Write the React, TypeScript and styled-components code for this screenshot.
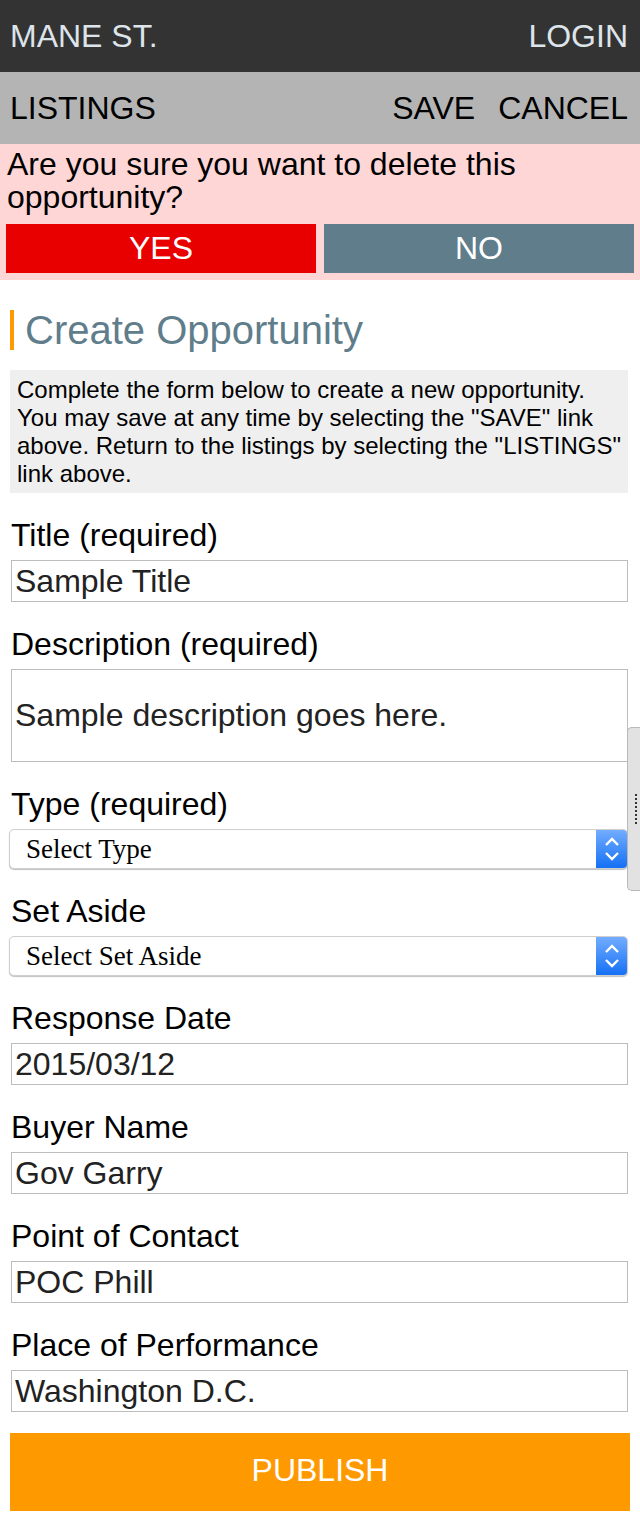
import styled, { createGlobalStyle } from "styled-components";

const GlobalStyle = createGlobalStyle`
  body {
    margin: 0;
    background: #fff;
    font-family: "Liberation Sans", Arial, sans-serif;
  }
  * { box-sizing: border-box; }
`;

interface IField {
    label: string;
    kind: 'input' | 'textarea' | 'select';
    value: string;
}

const FIELDS: IField[] = [
    { label: 'Title (required)', kind: 'input', value: 'Sample Title' },
    { label: 'Description (required)', kind: 'textarea', value: 'Sample description goes here.' },
    { label: 'Type (required)', kind: 'select', value: 'Select Type' },
    { label: 'Set Aside', kind: 'select', value: 'Select Set Aside' },
    { label: 'Response Date', kind: 'input', value: '2015/03/12' },
    { label: 'Buyer Name', kind: 'input', value: 'Gov Garry' },
    { label: 'Point of Contact', kind: 'input', value: 'POC Phill' },
    { label: 'Place of Performance', kind: 'input', value: 'Washington D.C.' },
];

const Page = styled.div`
  position: relative;
  width: 640px;
  min-height: 1524px;
`;

const Bar = styled.div<{ $dark?: boolean }>`
  height: 72px;
  display: flex;
  align-items: center;
  justify-content: space-between;
  padding: 0 12px 0 10px;
  background: ${p => p.$dark ? '#333333' : '#b4b4b4'};
  color: ${p => p.$dark ? '#dde4ea' : '#000'};
  font-size: 32px;
  line-height: 36px;
`;

const BarLinks = styled.div`
  display: flex;
  gap: 23px;
`;

const Alert = styled.div`
  background: #ffd6d6;
  padding: 4px 6px 7px;
`;

const AlertText = styled.p`
  margin: 0 0 10px 1px;
  font-size: 32px;
  line-height: 33px;
  color: #000;
`;

const AlertButtons = styled.div`
  display: grid;
  grid-template-columns: 1fr 1fr;
  gap: 8px;
`;

const AlertButton = styled.button<{ $confirm?: boolean }>`
  height: 49px;
  border: 0;
  padding: 0;
  background: ${p => p.$confirm ? '#e80000' : '#607d8b'};
  color: #fff;
  font-family: inherit;
  font-size: 32px;
`;

const Content = styled.main`
  padding: 30px 12px 13px 10px;
  border-left: 1px solid #ececec;
  margin-left: -1px;
`;

const Heading = styled.h1`
  margin: 0;
  height: 40px;
  border-left: 4px solid #ff9900;
  padding-left: 11px;
  font-size: 40px;
  line-height: 40px;
  font-weight: normal;
  color: #607d8b;
`;

const Intro = styled.p`
  margin: 20px 0 0;
  padding: 6px 4px 5px 7px;
  background: #efefef;
  font-size: 24px;
  line-height: 28px;
  color: #000;
`;

const Group = styled.div`
  margin-top: 26px;
`;

const Label = styled.label`
  display: block;
  font-size: 32px;
  line-height: 32px;
  margin: 0 0 9px 1px;
  color: #000;
`;

const TextInput = styled.input`
  display: block;
  width: calc(100% - 1px);
  margin-left: 1px;
  height: 42px;
  border: 1px solid #bdbdbd;
  padding: 0 3px;
  font-family: inherit;
  font-size: 32px;
  color: #222;
  outline: none;
`;

const TextArea = styled.textarea`
  display: block;
  width: calc(100% - 1px);
  margin-left: 1px;
  height: 93px;
  border: 1px solid #bdbdbd;
  padding: 27px 3px 0;
  font-family: inherit;
  font-size: 32px;
  line-height: 36px;
  color: #222;
  resize: none;
  outline: none;
`;

const SelectBox = styled.div`
  display: flex;
  height: 40px;
  margin-left: -1px;
  border: 1px solid #cfcfcf;
  border-radius: 5px;
  box-shadow: 0 1px 1px rgba(0, 0, 0, 0.25);
  overflow: hidden;
  background: #fff;
`;

const Select = styled.select`
  flex: 1;
  appearance: none;
  border: 0;
  background: transparent;
  padding: 0 0 0 16px;
  font-family: "Liberation Serif", "Times New Roman", serif;
  font-size: 27px;
  color: #000;
  outline: none;
`;

const SelectArrow = styled.span`
  width: 31px;
  display: flex;
  align-items: center;
  justify-content: center;
  background: linear-gradient(#72adff, #1570f5);
`;

const Publish = styled.button`
  display: block;
  width: calc(100% + 2px);
  height: 78px;
  margin-top: 21px;
  border: 0;
  background: #ff9900;
  color: #fff;
  font-family: inherit;
  font-size: 32px;
  line-height: 36px;
  padding: 0 0 4px;
`;

const Handle = styled.div`
  position: absolute;
  top: 727px;
  right: 0;
  width: 13px;
  height: 164px;
  background: #e2e2e2;
  border: 1px solid #b9b9b9;
  border-right: 0;
  border-radius: 5px 0 0 5px;
  display: flex;
  align-items: center;
  justify-content: flex-end;
  padding-right: 3px;
`;

const Grip = styled.span`
  width: 2px;
  height: 30px;
  border-left: 2px dotted #333;
`;

function Chevrons() {
    return (
        <svg width="16" height="30" viewBox="0 0 16 30">
            <polyline points="2,11 8,5 14,11" fill="none" stroke="#fff" strokeWidth="2.4" />
            <polyline points="2,19 8,25 14,19" fill="none" stroke="#fff" strokeWidth="2.4" />
        </svg>
    );
}

function Field({ field }: { field: IField }) {
    const id = field.label.replace(/\W+/g, '-').toLowerCase();
    return (
        <Group>
            <Label htmlFor={id}>{field.label}</Label>
            {field.kind === 'input' && <TextInput id={id} defaultValue={field.value} />}
            {field.kind === 'textarea' && <TextArea id={id} defaultValue={field.value} />}
            {field.kind === 'select' && (
                <SelectBox>
                    <Select id={id} defaultValue="">
                        <option value="">{field.value}</option>
                    </Select>
                    <SelectArrow><Chevrons /></SelectArrow>
                </SelectBox>
            )}
        </Group>
    );
}

export default function App() {
    return (
        <Page>
            <GlobalStyle />
            <Bar $dark>
                <span>MANE ST.</span>
                <span>LOGIN</span>
            </Bar>
            <Bar>
                <span>LISTINGS</span>
                <BarLinks>
                    <span>SAVE</span>
                    <span>CANCEL</span>
                </BarLinks>
            </Bar>
            <Alert>
                <AlertText>Are you sure you want to delete this opportunity?</AlertText>
                <AlertButtons>
                    <AlertButton $confirm>YES</AlertButton>
                    <AlertButton>NO</AlertButton>
                </AlertButtons>
            </Alert>
            <Content>
                <Heading>Create Opportunity</Heading>
                <Intro>
                    Complete the form below to create a new opportunity. You may save at any time
                    by selecting the "SAVE" link above. Return to the listings by selecting the
                    "LISTINGS" link above.
                </Intro>
                {FIELDS.map(field => <Field key={field.label} field={field} />)}
                <Publish>PUBLISH</Publish>
            </Content>
            <Handle><Grip /></Handle>
        </Page>
    );
}
